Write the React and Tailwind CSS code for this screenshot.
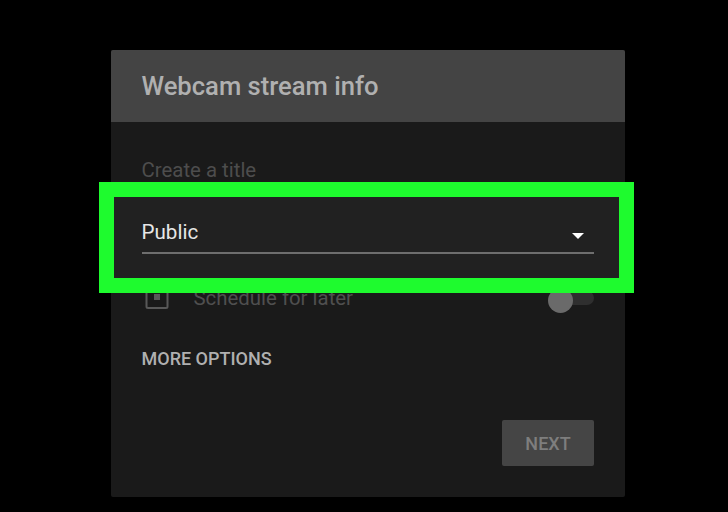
import React from 'react';

function App() {
  return (
    <main className="h-[512px] w-[728px] overflow-hidden bg-black pt-[50px] pl-[111px] font-['Roboto',sans-serif]">
      <div className="relative flex h-[447px] w-[514px] flex-col rounded-[2px] bg-[#1a1a1a]">
        <header className="flex h-[72px] items-center rounded-t-[2px] bg-[#444444] px-[30.5px]">
          <h1 className="pt-[1px] text-[25.6px] font-medium text-[#b0b0b0]">Webcam stream info</h1>
        </header>

        <div className="flex flex-1 flex-col pr-[31px] pl-[30.5px]">
          <p className="mt-[36px] text-[20.4px] leading-6 text-[#4d4d4d]">Create a title</p>

          <div className="mt-[102px] flex h-[28px] items-center">
            <svg width="24" height="24" viewBox="0 0 24 24" className="ml-[3px] text-[#585858]">
              <rect x="1.5" y="1" width="21" height="21" rx="1.5" fill="none" stroke="currentColor" strokeWidth="2" />
              <rect x="9" y="8" width="6" height="6" fill="currentColor" />
            </svg>
            <span className="ml-[25px] text-[20.4px] text-[#4f4f4f]">Schedule for later</span>
            <div className="relative ml-auto h-[18px] w-[46px]">
              <div className="absolute top-[2px] right-0 h-[14px] w-[36px] rounded-full bg-[#2f2f2f]" />
              <div className="absolute top-[-1px] left-0 h-[25px] w-[25px] rounded-full bg-[#6a6a6a]" />
            </div>
          </div>

          <button className="mt-[35px] self-start text-[18px] leading-6 font-medium text-[#b0b0b0]">
            MORE OPTIONS
          </button>

          <button className="mt-[49px] h-[46px] w-[92px] self-end rounded-[2px] bg-[#454545] text-[18px] font-medium text-[#7e7e7e]">
            NEXT
          </button>
        </div>

        {/* green highlight sits over the form */}
        <div className="absolute top-[132px] left-[-12px] h-[111px] w-[535px] border-[15px] border-[#1efb2e] bg-[#212121]">
          <div className="mr-[25px] ml-[27.5px] flex h-[57px] items-end justify-between border-b-2 border-[#6e6e6e] pb-[8px]">
            <span className="text-[20.6px] leading-6 text-[#e6e6e6]">Public</span>
            <span className="mr-[10px] mb-[5px] h-0 w-0 border-x-[6px] border-t-[6px] border-x-transparent border-t-white" />
          </div>
        </div>
      </div>
    </main>
  );
}

export default App;
